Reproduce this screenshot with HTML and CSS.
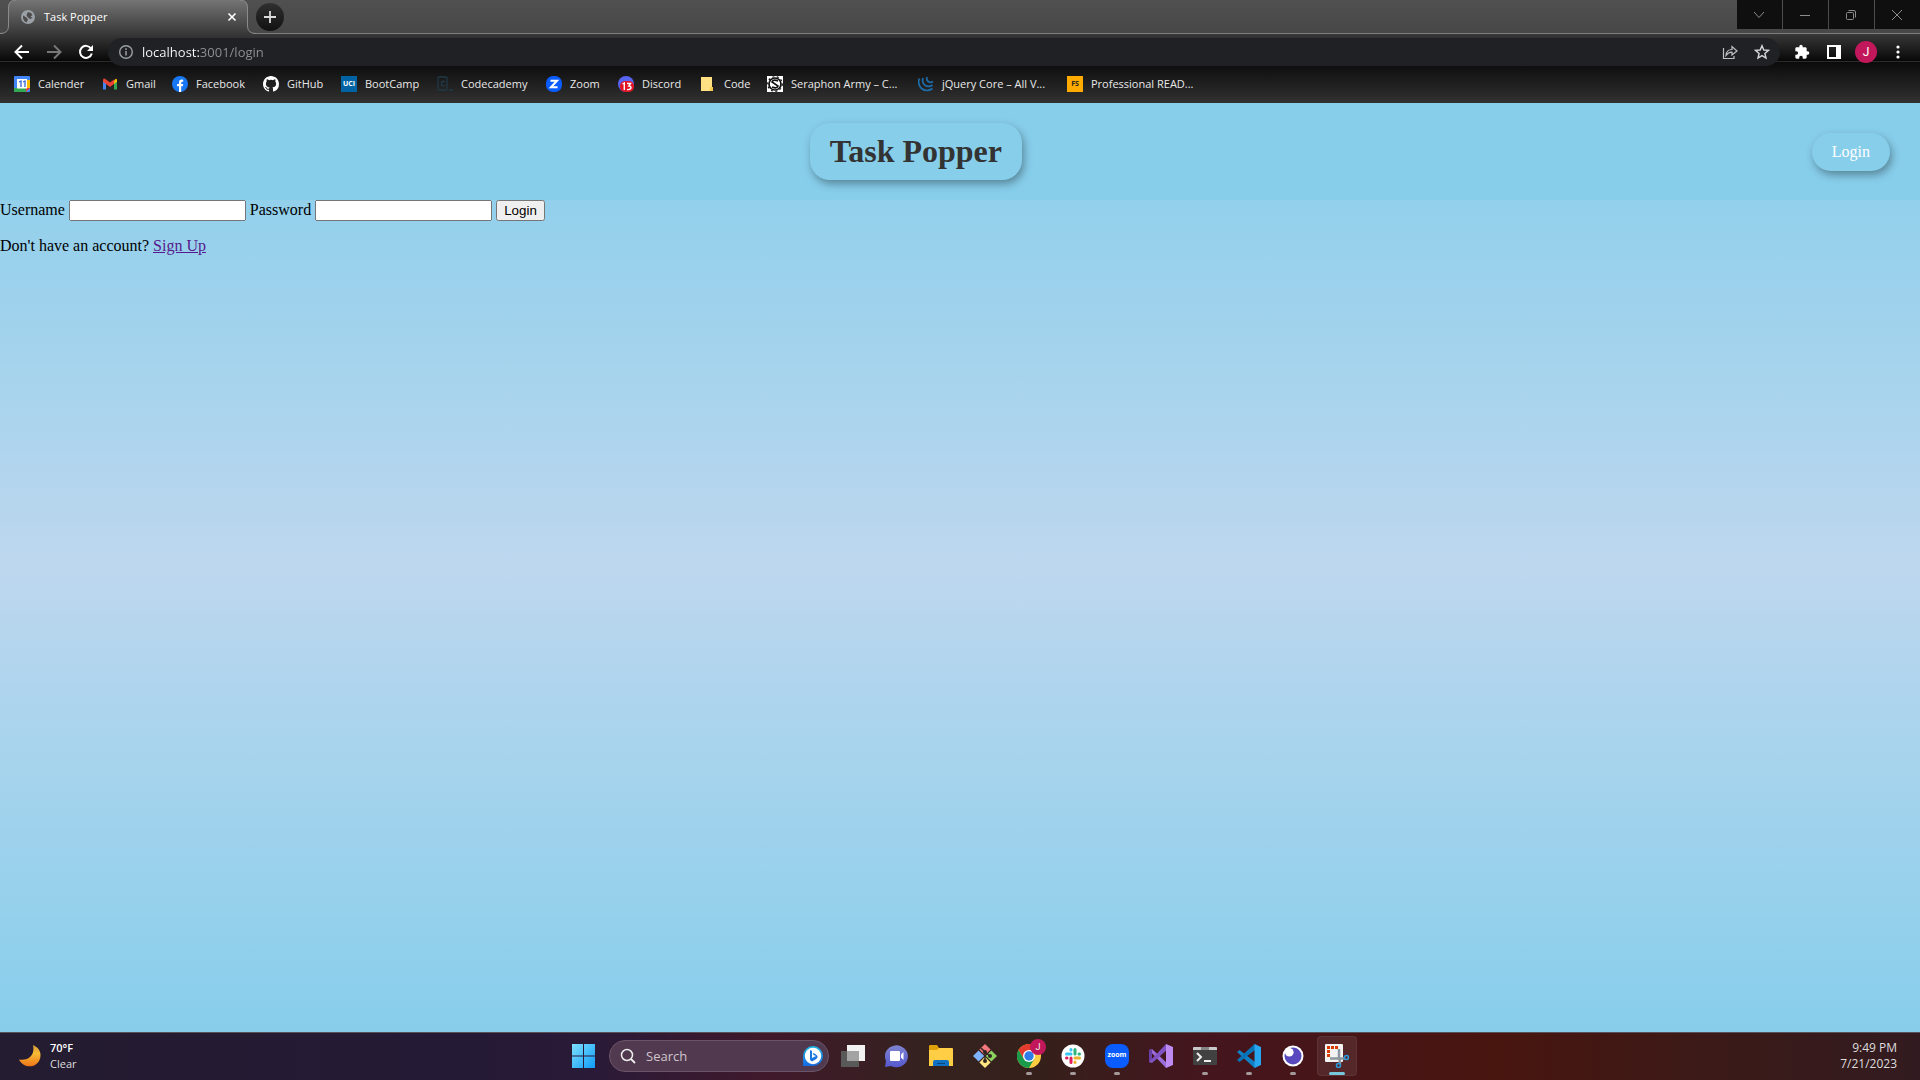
FILE: index.html
```html
<!DOCTYPE html>
<html lang="en">
<head>
<meta charset="utf-8">
<title>Task Popper</title>
<link rel="stylesheet" href="styles.css">
</head>
<body>
<div class="desktop">
  <header class="browser">
    <div class="tab-strip">
      <div class="tab">
        <svg class="tab-shape" viewBox="0 0 256 34" aria-hidden="true">
          <defs><linearGradient id="tabFill" x1="0" y1="0" x2="0" y2="1"><stop offset="0" stop-color="#747474"/><stop offset="1" stop-color="#383838"/></linearGradient></defs>
          <path d="M0 34Q8 33 8 26V8Q8 0 16 0H240Q248 0 248 8V26Q248 33 256 34Z" fill="url(#tabFill)"/>
          <path d="M0 33.500Q8.500 33.500 8.500 26V8Q8.500 0 16 0M240 0Q247.500 0 247.500 8V26Q247.500 33.500 256 33.500" fill="none" stroke="#8b8b8b"/>
        </svg>
        <div class="tab-content">
          <svg width="14" height="14" viewBox="0 0 14 14" aria-hidden="true"><circle cx="7" cy="7" r="7" fill="#9aa0a6"/><path d="M2 5.500L5.500 7.500 7 9.500 5.500 12.500Q1.500 11 2 5.500ZM6.500 2.500Q10 1.500 11.500 5L9.500 6.500 11.500 8 9 9 7 7.500 5.500 5.500Z" fill="#4c4c4c"/></svg>
          <span class="tab-title">Task Popper</span>
          <button class="plain" aria-label="Close tab"><svg width="10" height="10" viewBox="0 0 10 10"><path d="M1.500 1.500L8.500 8.500M8.500 1.500L1.500 8.500" stroke="#fff" stroke-width="1.600"/></svg></button>
        </div>
      </div>
      <button class="new-tab" aria-label="New tab"><svg width="12" height="12" viewBox="0 0 12 12"><path d="M6 0V12M0 6H12" stroke="#dadada" stroke-width="1.800"/></svg></button>
      <div class="window-buttons">
        <button aria-label="Search tabs"><svg width="12" height="12" viewBox="0 0 12 12"><path d="M1 3L6 8.500 11 3"/></svg></button>
        <button aria-label="Minimize"><svg width="12" height="12" viewBox="0 0 12 12"><path d="M1 6.500H11"/></svg></button>
        <button aria-label="Restore"><svg width="12" height="12" viewBox="0 0 12 12"><rect x="1.500" y="3.500" width="7" height="7" rx="1"/><path d="M3.500 1.500H9Q10.500 1.500 10.500 3V8.500"/></svg></button>
        <button aria-label="Close"><svg width="12" height="12" viewBox="0 0 12 12"><path d="M1 1L11 11M11 1L1 11"/></svg></button>
      </div>
    </div>

    <div class="toolbar">
      <div class="tools">
        <button class="plain" aria-label="Back"><svg width="16" height="16" viewBox="0 0 16 16"><path d="M15 8H2M8 1.500L1.500 8 8 14.500" fill="none" stroke="#fff" stroke-width="2"/></svg></button>
        <button class="plain" aria-label="Forward"><svg width="16" height="16" viewBox="0 0 16 16"><path d="M1 8H14M8 1.500L14.500 8 8 14.500" fill="none" stroke="#777" stroke-width="2"/></svg></button>
        <button class="plain" aria-label="Reload"><svg width="16" height="16" viewBox="0 0 16 16"><path d="M13 4.500A6 6 0 1 0 13.800 9.500" fill="none" stroke="#fff" stroke-width="2"/><path d="M15 1V7H9Z" fill="#fff"/></svg></button>
      </div>
      <div class="omnibox">
        <svg width="16" height="16" viewBox="0 0 16 16" aria-hidden="true"><circle cx="8" cy="8" r="6.300" fill="none" stroke="#9aa0a6" stroke-width="1.400"/><path d="M8 7V11.500M8 4.300V6" stroke="#9aa0a6" stroke-width="1.500"/></svg>
        <input class="address" type="text" aria-label="Address" value="localhost:3001/login">
        <div class="tools">
          <button class="plain" aria-label="Share"><svg width="16" height="16" viewBox="0 0 16 16"><path d="M1.500 4V14.500H12V12M4 11.500Q4.500 5.500 10 5.500V2.500L15 7 10 11V8.200Q6.500 8 4 11.500Z" fill="none" stroke="#bdc1c6" stroke-width="1.200"/></svg></button>
          <button class="plain" aria-label="Bookmark this page"><svg width="16" height="16" viewBox="0 0 16 16"><path d="M8 1.700L9.800 6 14.500 6.400 10.900 9.500 12 14 8 11.600 4 14 5.100 9.500 1.500 6.400 6.200 6Z" fill="none" stroke="#d5d7da" stroke-width="1.400"/></svg></button>
        </div>
      </div>
      <div class="tools">
        <button class="plain" aria-label="Extensions"><svg width="16" height="16" viewBox="0 0 24 24"><path d="M20.500 11H19V7c0-1.100-.9-2-2-2h-4V3.500a2.500 2.500 0 0 0-5 0V5H4c-1.100 0-2 .9-2 2v3.800h1.500a2.700 2.700 0 0 1 0 5.400H2V20c0 1.100.9 2 2 2h3.800v-1.500a2.700 2.700 0 0 1 5.400 0V22H17c1.100 0 2-.9 2-2v-4h1.500a2.500 2.500 0 0 0 0-5z" fill="#fff"/></svg></button>
        <button class="plain" aria-label="Side panel"><svg width="14" height="14" viewBox="0 0 14 14"><path d="M0 0H14V14H0ZM2 2V12H9V2Z" fill="#fff" fill-rule="evenodd"/></svg></button>
        <button class="plain" aria-label="Profile"><span class="avatar">J</span></button>
        <button class="plain" aria-label="Menu"><svg width="4" height="14" viewBox="0 0 4 14" fill="#fff"><circle cx="2" cy="2" r="1.600"/><circle cx="2" cy="7" r="1.600"/><circle cx="2" cy="12" r="1.600"/></svg></button>
      </div>
    </div>

    <nav class="bookmarks" aria-label="Bookmarks">
      <a href="#"><svg viewBox="0 0 16 16"><rect width="16" height="16" rx="1" fill="#4285f4"/><path d="M12 4H16V12H12Z" fill="#fbbc04"/><path d="M0 12H12V16H1Q0 16 0 15Z" fill="#34a853"/><path d="M12 12H16L12 16Z" fill="#ea4335"/><rect x="3" y="3" width="10" height="9.500" fill="#fff"/><path d="M5 6L7 5V11M9 6L11 5V11" fill="none" stroke="#3267d6" stroke-width="1.300"/></svg>Calender</a>
      <a href="#"><svg viewBox="0 0 16 16"><path d="M1 4V13.500H4V7Z" fill="#4285f4"/><path d="M15 4V13.500H12V7Z" fill="#34a853"/><path d="M12 4.500V8L15 5.800V4Q14.500 1.500 12 4.500Z" fill="#fbbc04"/><path d="M1 5.800V4Q1.500 1.500 4 3.500L8 6.500 12 3.500V8L8 11 4 8Z" fill="#ea4335"/></svg>Gmail</a>
      <a href="#"><svg viewBox="0 0 16 16"><circle cx="8" cy="8" r="8" fill="#1877f2"/><path d="M7 16V10.300H5V8H7V6.300Q7 3.600 9.700 3.600L11.200 3.700V5.700H10.200Q9.200 5.700 9.200 6.700V8H11.200L10.800 10.300H9.200V16Z" fill="#fff"/></svg>Facebook</a>
      <a href="#"><svg viewBox="0 0 16 16"><path fill="#fff" d="M8 0C3.580 0 0 3.580 0 8c0 3.540 2.290 6.530 5.470 7.590.4.070.55-.17.550-.38 0-.19-.01-.82-.01-1.490-2.010.37-2.530-.49-2.690-.94-.09-.23-.48-.94-.82-1.130-.28-.15-.68-.52-.01-.53.630-.01 1.080.58 1.230.82.720 1.210 1.870.87 2.330.66.070-.52.280-.87.510-1.070-1.780-.2-3.640-.89-3.640-3.950 0-.87.310-1.590.82-2.150-.08-.2-.36-1.020.08-2.120 0 0 .67-.21 2.200.82a7.600 7.600 0 0 1 4 0c1.530-1.040 2.200-.82 2.200-.82.44 1.100.16 1.920.08 2.120.51.560.82 1.270.82 2.150 0 3.070-1.870 3.750-3.650 3.950.29.250.54.730.54 1.480 0 1.070-.01 1.930-.01 2.200 0 .21.150.46.550.38A8 8 0 0 0 16 8c0-4.420-3.580-8-8-8z"/></svg>GitHub</a>
      <a href="#"><span class="badge-icon uci">UCI</span>BootCamp</a>
      <a href="#"><svg viewBox="0 0 16 16" fill="none" stroke="#203848" stroke-width="1.300"><rect x="1" y="1" width="9" height="13" rx="1"/><path d="M8 6Q6 4.500 4.500 6V9Q6 10.500 8 9M12 14H16"/></svg>Codecademy</a>
      <a href="#"><svg viewBox="0 0 16 16"><rect width="16" height="16" rx="7" fill="#0b5cff"/><path d="M4.500 4.800H11L5 11.200H11.500" fill="none" stroke="#fff" stroke-width="2"/></svg>Zoom</a>
      <a href="#"><svg viewBox="0 0 16 16"><circle cx="8" cy="8" r="8" fill="#5865f2"/><rect x="2" y="5" width="14" height="11" rx="5" fill="#e01525"/><path d="M4.500 8L6.300 7V14M9 7.500H12.500L10.800 10Q13 10 13 12 12.500 14 9 13.500" fill="none" stroke="#fff" stroke-width="1.400"/></svg>Discord</a>
      <a href="#"><svg viewBox="0 0 16 16"><path d="M1 1H12V11H13V15H1Z" fill="#ffe082"/><path d="M10 11H13V15H10Z" fill="#f7cb4d"/></svg>Code</a>
      <a href="#"><svg viewBox="0 0 16 16"><rect width="16" height="16" fill="#fff"/><circle cx="8" cy="8" r="6" fill="none" stroke="#111" stroke-width="1.700"/><circle cx="8" cy="8" r="7.300" fill="none" stroke="#111" stroke-width="1.200" stroke-dasharray="2 2.500"/><path d="M11 5Q6 3 5 6L11 10Q10 13 5 11" fill="none" stroke="#111" stroke-width="1.700"/></svg>Seraphon Army – C...</a>
      <a href="#"><svg viewBox="0 0 16 16" fill="none" stroke="#1d6dab" stroke-width="1.700"><path d="M1.500 2.500Q-1 8 3.500 12.500 9 16.500 14.500 12.500M5 2Q3.500 6 6.500 8.800 10.500 12 14.500 9M9 1Q8 4 10.500 5.700 12.500 7 15 5.500"/></svg>jQuery Core – All V...</a>
      <a href="#"><span class="badge-icon fs">FS</span>Professional READ...</a>
    </nav>
  </header>

  <main class="page">
    <div class="navbar">
      <div></div>
      <h1 class="brand">Task Popper</h1>
      <a class="login-link" href="#">Login</a>
    </div>
    <form class="login-form">
      <label for="username">Username</label>
      <input id="username" type="text">
      <label for="password">Password</label>
      <input id="password" type="password">
      <button type="button">Login</button>
    </form>
    <p class="signup">Don't have an account? <a href="#">Sign Up</a></p>
  </main>

  <footer class="taskbar">
    <div class="weather">
      <svg width="24" height="24" viewBox="0 0 24 24" aria-hidden="true"><defs><linearGradient id="moon" x1="0" y1="0" x2="0" y2="1"><stop offset="0" stop-color="#d99a3a"/><stop offset=".4" stop-color="#f8bb35"/><stop offset="1" stop-color="#ee7417"/></linearGradient></defs><path d="M15 1C22 4 24 10 21.500 16 18 24 6 25 1 15.500 12 17 17 10 15 1Z" fill="url(#moon)"/></svg>
      <div class="weather-text"><strong>70°F</strong><span>Clear</span></div>
    </div>
    <div class="apps">
      <button class="app" aria-label="Start"><svg viewBox="0 0 24 24"><defs><linearGradient id="win" x1="0" y1="0" x2="1" y2="1"><stop offset="0" stop-color="#7ee0ff"/><stop offset="1" stop-color="#0f9bf7"/></linearGradient></defs><path d="M1 0H12V11.500H1ZM13 0H24V11.500H13ZM1 12.500H12V24H1ZM13 12.500H24V24H13Z" fill="url(#win)"/></svg></button>
      <div class="search">
        <svg width="16" height="16" viewBox="0 0 16 16" aria-hidden="true"><circle cx="7" cy="7" r="5.500" fill="none" stroke="#eee" stroke-width="1.500"/><path d="M11 11L15 15" stroke="#eee" stroke-width="1.800"/></svg>
        <input type="text" placeholder="Search" aria-label="Search">
        <svg width="20" height="20" viewBox="0 0 20 20" aria-hidden="true"><defs><linearGradient id="bing" x1="0" y1="0" x2="0" y2="1"><stop offset="0" stop-color="#20b9e8"/><stop offset="1" stop-color="#1668e0"/></linearGradient></defs><path d="M0 20V10A10 10 0 1 1 10 20Z" fill="url(#bing)"/><circle cx="10" cy="10" r="8.200" fill="#fff"/><path d="M7 4L9 5V12L13 10 10.500 9 9.800 7Q15 8.500 14.500 11.500 14 13 9 15.500L7 14Z" fill="#1a78e0"/></svg>
      </div>
      <button class="app" aria-label="Task view"><svg viewBox="0 0 24 24"><rect x="6" y="1" width="18" height="16" fill="#f2f2f2"/><rect y="7" width="18" height="16" fill="#595959"/><rect x="6" y="7" width="12" height="10" fill="#a3a3a3"/></svg></button>
      <button class="app" aria-label="Chat"><svg viewBox="0 0 24 24"><defs><linearGradient id="chat" x1="0" y1="0" x2="0" y2="1"><stop offset="0" stop-color="#7f84cf"/><stop offset="1" stop-color="#5559d0"/></linearGradient></defs><path d="M0 23L1 17A11.500 11 0 1 1 6 22Z" fill="url(#chat)"/><rect x="5" y="7" width="10" height="10" rx="1" fill="#fff"/><path d="M16 10.500L18.500 8V16L16 13.500Z" fill="#fff"/></svg></button>
      <button class="app" aria-label="File Explorer"><svg viewBox="0 0 24 24"><path d="M0 2Q0 1 1 1H8L10 4H23V8H0Z" fill="#e0a00a"/><path d="M0 6H8L10 4H23Q24 4 24 5V22H0Z" fill="#ffce45"/><path d="M4 22V18Q4 16 6 16H18Q20 16 20 18V22Z" fill="#0f72c4"/><path d="M8 19H16V20H8Z" fill="#0a4778"/></svg></button>
      <button class="app" aria-label="Git"><svg viewBox="0 0 24 24"><path d="M12 0L17.600 5.600 12 11.200 6.400 5.600Z" fill="#f4777d"/><path d="M5.600 6.400L11.200 12 5.600 17.600 0 12Z" fill="#80b3ff"/><path d="M18.400 6.400L24 12 18.400 17.600 12.800 12Z" fill="#8dd35f"/><path d="M12 12.800L17.600 18.400 12 24 6.400 18.400Z" fill="#ffe680"/><path d="M8 4L12 8V17M12 8L17 12" fill="none" stroke="#302522" stroke-width="1.500"/><g fill="#302522"><circle cx="12" cy="8" r="2"/><circle cx="17" cy="12" r="2"/><circle cx="12" cy="17" r="2"/></g></svg></button>
      <button class="app running" aria-label="Chrome"><svg viewBox="0 0 24 24"><circle cx="12" cy="12" r="12" fill="#ffcd40"/><path d="M1.600 6A12 12 0 0 1 22.400 6H12L6.800 15Z" fill="#e33b2e"/><path d="M1.600 6A12 12 0 0 0 12 24L17.200 15H6.800Z" fill="#1a9b4b"/><circle cx="12" cy="12" r="6" fill="#fff"/><circle cx="12" cy="12" r="4.700" fill="#2f7de9"/></svg><span class="app-badge">J</span></button>
      <button class="app running" aria-label="Slack"><svg viewBox="0 0 24 24" fill="none" stroke-width="3" stroke-linecap="round"><circle cx="12" cy="12" r="11.500" fill="#fff"/><path d="M10 5.500V6M5.500 10H10" stroke="#36c5f0"/><path d="M14 5.500V10M18.500 10H18" stroke="#2eb67d"/><path d="M14 18.500V18M14 14H18.500" stroke="#ecb22e"/><path d="M10 18.500V14M5.500 14H6" stroke="#e01e5a"/></svg></button>
      <button class="app running" aria-label="Zoom"><span class="zoom-icon">zoom</span></button>
      <button class="app" aria-label="Visual Studio"><svg viewBox="0 0 24 24"><path d="M0 6L3 5 19 20 17 24Z" fill="#9b6edb"/><path d="M0 6L3 5V19L0 18Z" fill="#6940a5"/><path d="M0 18L17 0 19 5 3 19Z" fill="#8152c2"/><path d="M17 0L24 3V21L17 24Z" fill="#bd8bf1"/></svg></button>
      <button class="app running" aria-label="Terminal"><svg viewBox="0 0 24 24"><rect y="3" width="24" height="18" rx="1" fill="#414141"/><path d="M0 6V4Q0 3 1 3H23Q24 3 24 4V6Z" fill="#c9c9c9"/><path d="M8 3H16V6H8Z" fill="#858585"/><path d="M4 9L8 13 4 17M11 17H18" fill="none" stroke="#eee" stroke-width="2"/></svg></button>
      <button class="app running" aria-label="Visual Studio Code"><svg viewBox="0 0 24 24"><path d="M0 8L2.500 6 18 18V24H17.500Z" fill="#1180c5"/><path d="M0 16L17.500 0H18V6L2.500 18Z" fill="#0873b7"/><path d="M17.500 0L24 3V21L17.500 24Z" fill="#27a5ee"/></svg></button>
      <button class="app running" aria-label="Insomnia"><svg viewBox="0 0 24 24"><circle cx="12" cy="12" r="10.500" fill="#fff"/><circle cx="12" cy="12" r="8.500" fill="#5849be"/><circle cx="8.300" cy="8.300" r="4.300" fill="#fff"/></svg></button>
      <button class="app running active" aria-label="Snipping Tool"><svg viewBox="0 0 24 24"><rect width="18" height="18" rx="1" fill="#f3f3f3"/><path d="M3.500 13V3.500H13" fill="none" stroke="#d83b01" stroke-width="3" stroke-dasharray="3 1"/><path d="M14 5V14.500H20M5 14.500H14.500L15 20" fill="none" stroke="#8d969e" stroke-width="2.500"/><circle cx="21.500" cy="13.500" r="2" fill="none" stroke="#2a9bdc" stroke-width="1.600"/><circle cx="13.500" cy="21.500" r="2" fill="none" stroke="#2a9bdc" stroke-width="1.600"/></svg></button>
    </div>
    <div class="clock"><time>9:49 PM</time><time>7/21/2023</time></div>
  </footer>
</div>
</body>
</html>
```
FILE: styles.css
```css
* { box-sizing: border-box; }

body { margin: 0; }

.desktop {
  min-height: 100vh;
  display: flex;
  flex-direction: column;
  --ui: "Open Sans", "Noto Sans", sans-serif;
}

/* Browser window */
.browser {
  font-family: var(--ui);
  font-size: 11px;
  color: #e8e8e8;
  background: linear-gradient(#383838 34px, #0a0a0a 60px, #050505 61px, #2b2b2b 61px, #2b2b2b 62px, #0b0b0b 62px, #313131 103px);
}

button { font-family: inherit; }

.plain,
.new-tab,
.window-buttons button,
.app {
  border: 0;
  padding: 0;
  background: none;
  color: inherit;
  display: flex;
  align-items: center;
  justify-content: center;
}

.tab-strip {
  height: 34px;
  display: flex;
  background: linear-gradient(#505050, #474747);
  box-shadow: inset 0 -1px #7d7d7d;
}

.tab { width: 256px; display: grid; }
.tab-shape, .tab-content { grid-area: 1 / 1; }
.tab-shape { width: 256px; height: 34px; }
.tab-content {
  display: flex;
  align-items: center;
  gap: 9px;
  padding: 0 19px 1px 21px;
  color: #fff;
}
.tab-title { flex: 1; }

.new-tab {
  width: 28px;
  height: 28px;
  margin-top: 3px;
  border-radius: 50%;
  background: linear-gradient(#303030, #111);
}

.window-buttons {
  margin-left: auto;
  height: 29px;
  display: flex;
  gap: 1px;
}
.window-buttons button { width: 45px; padding-right: 2px; background: #0f0f0f; }
.window-buttons svg { fill: none; stroke: #8c8c8c; stroke-width: 1; }

.toolbar {
  display: flex;
  gap: 6px;
  padding: 4px 6px 0;
}
.tools { display: flex; align-items: center; }
.tools .plain { width: 32px; height: 28px; }

.omnibox {
  flex: 1;
  height: 28px;
  border-radius: 14px;
  background: #202124;
  display: flex;
  align-items: center;
  gap: 8px;
  padding: 0 2px 0 10px;
}
.address {
  flex: 1;
  min-width: 0;
  border: 0;
  padding: 0;
  font: 13px/20px var(--ui);
  color: #fff;
  -webkit-text-fill-color: transparent;
  background: linear-gradient(90deg, #fff 57px, #8f9398 57px);
  -webkit-background-clip: text;
  background-clip: text;
}

.avatar {
  width: 22px;
  height: 22px;
  border-radius: 50%;
  background: #c2185b;
  color: #fff;
  font: 12px/22px Roboto, sans-serif;
}

.bookmarks {
  height: 37px;
  padding: 0 0 2px 14px;
  display: grid;
  grid-template-columns: 88px 70px 91px 78px 96px 109px 72px 82px 67px 151px 149px 1fr;
  align-items: center;
}
.bookmarks a {
  display: flex;
  align-items: center;
  gap: 8px;
  color: inherit;
  text-decoration: none;
  white-space: nowrap;
}
.bookmarks svg, .badge-icon { width: 16px; height: 16px; flex: none; }
.badge-icon { font: bold 7px/16px var(--ui); text-align: center; }
.uci { background: #0064a4; color: #fff; }
.fs { background: #ffab00; color: #222; }

/* Web page */
.page {
  flex: 1;
  font: 16px "Liberation Serif", serif;
  color: #000;
  background: linear-gradient(#87ceeb, #bdd7ee, #87ceeb);
}
.navbar {
  display: flex;
  justify-content: space-between;
  align-items: center;
  padding: 20px 30px 20px 20px;
  background: #87ceeb;
}
.brand, .login-link {
  padding: 10px 20px;
  border-radius: 20px;
  background: #87ceeb;
  box-shadow: 2px 4px 8px rgba(0, 0, 0, 0.35);
}
.brand {
  margin: 0;
  font-size: 32px;
  line-height: 37px;
  color: #333;
}
.login-link {
  line-height: 18px;
  color: #fff;
  text-decoration: none;
}
.login-form input { width: 177px; }
.login-form button {
  font-family: "Liberation Sans", sans-serif;
}
.signup { margin: 16px 0; }
.signup a { color: #551a8b; }

/* Taskbar */
.taskbar {
  height: 48px;
  padding-bottom: 2px;
  display: grid;
  grid-template-columns: 1fr auto 1fr;
  align-items: center;
  border-top: 1px solid #5a5058;
  font: 11px/16px var(--ui);
  color: #ddd;
  background: linear-gradient(90deg, #241c30 0%, #251a36 25%, #2a1a38 31%, #40192b 40%, #35221f 48%, #35201b 54%, #45151e 63%, #48150f 78%, #3a1a18 90%, #321b20 100%);
}
.weather { display: flex; align-items: center; gap: 8px; padding-left: 18px; }
.weather-text { display: flex; flex-direction: column; }
.weather-text strong { font-weight: 600; color: #fff; }

.apps { display: flex; align-items: center; }
.app { width: 40px; height: 40px; margin: 0 2px; position: relative; border-radius: 4px; }
.app svg { width: 24px; height: 24px; }
.running::after {
  content: "";
  position: absolute;
  bottom: 1px;
  width: 6px;
  height: 3px;
  border-radius: 2px;
  background: #a49a9a;
}
.active { background: rgba(255, 255, 255, 0.08); box-shadow: inset 0 0 0 1px rgba(255, 255, 255, 0.06); }
.active::after { width: 16px; background: #76c7dc; }
.app-badge {
  position: absolute;
  top: 3px;
  right: 3px;
  width: 16px;
  height: 16px;
  border-radius: 50%;
  background: #c2185b;
  color: #eee;
  font: 9px/16px Roboto, sans-serif;
}
.zoom-icon {
  width: 24px;
  height: 24px;
  border-radius: 8px;
  background: #0b5cff;
  color: #fff;
  font: bold 7px/22px var(--ui);
}
.search {
  width: 220px;
  height: 32px;
  margin: 0 2px 0 4px;
  padding: 0 5px 0 10px;
  display: flex;
  align-items: center;
  gap: 10px;
  border: 1px solid #6a5566;
  border-radius: 16px;
  background: #51394f;
}
.search input {
  flex: 1;
  min-width: 0;
  border: 0;
  padding: 0;
  background: none;
  font: 13px/20px var(--ui);
  color: #fff;
}
.search input::placeholder { color: #cfc5cd; }

.clock {
  display: flex;
  flex-direction: column;
  align-items: flex-end;
  padding-right: 23px;
  font-size: 12px;
}
```
